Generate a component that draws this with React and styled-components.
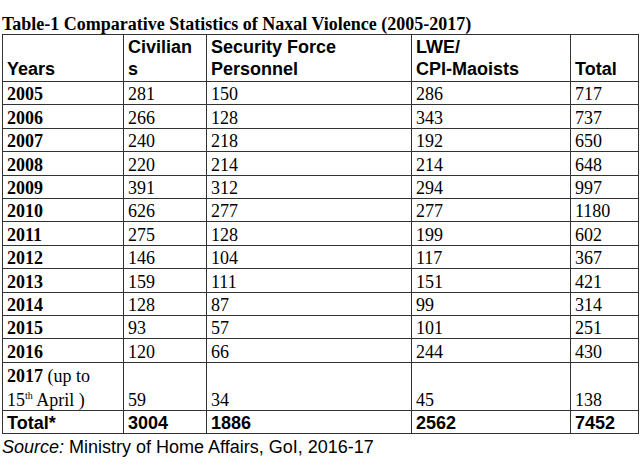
import styled, { createGlobalStyle } from "styled-components"

const GlobalStyle = createGlobalStyle`
    body {
        margin: 0;
        background: white;
    }
`

const Page = styled.div`
    padding: 14px 2px 0 2px;
    width: 636px;
`

const Title = styled.div`
    font-family: "Liberation Serif", "Times New Roman", serif;
    font-weight: bold;
    font-size: 18px;
    line-height: 20px;
    color: #000;
`

const Table = styled.table`
    width: 637px;
    border-collapse: collapse;
    table-layout: fixed;
    border: 1px solid #333;
`

const HeadCell = styled.th`
    font-family: "Liberation Sans", Arial, sans-serif;
    font-weight: bold;
    font-size: 18px;
    line-height: 22px;
    text-align: left;
    vertical-align: bottom;
    padding: 1px 4px 1px 4px;
    border: 1px solid #333;
    height: 44px;
`

const Cell = styled.td`
    font-family: ${p => p.$sans ? '"Liberation Sans", Arial, sans-serif' : '"Liberation Serif", "Times New Roman", serif'};
    font-weight: ${p => p.$bold ? "bold" : "normal"};
    font-size: 18px;
    line-height: 20px;
    text-align: left;
    vertical-align: bottom;
    padding: 1px 4px 0 4px;
    border: 1px solid #333;
    height: ${p => p.$tall ? "46px" : "21.4px"};
`

const Source = styled.div`
    font-family: "Liberation Sans", Arial, sans-serif;
    font-size: 18px;
    line-height: 22px;
    padding-top: 2px;
    color: #000;
`

const rows = [
    ["2005", 281, 150, 286, 717],
    ["2006", 266, 128, 343, 737],
    ["2007", 240, 218, 192, 650],
    ["2008", 220, 214, 214, 648],
    ["2009", 391, 312, 294, 997],
    ["2010", 626, 277, 277, 1180],
    ["2011", 275, 128, 199, 602],
    ["2012", 146, 104, 117, 367],
    ["2013", 159, 111, 151, 421],
    ["2014", 128, 87, 99, 314],
    ["2015", 93, 57, 101, 251],
    ["2016", 120, 66, 244, 430],
]

const App = () => {
    return (
        <>
            <GlobalStyle />
            <Page>
                <Title>Table-1 Comparative Statistics of Naxal Violence (2005-2017)</Title>
                <Table>
                    <colgroup>
                        <col style={{ width: 121 }} />
                        <col style={{ width: 83 }} />
                        <col style={{ width: 205 }} />
                        <col style={{ width: 159 }} />
                        <col style={{ width: 68 }} />
                    </colgroup>
                    <thead>
                        <tr>
                            <HeadCell>Years</HeadCell>
                            <HeadCell>Civilian<br />s</HeadCell>
                            <HeadCell>Security Force<br />Personnel</HeadCell>
                            <HeadCell>LWE/<br />CPI-Maoists</HeadCell>
                            <HeadCell>Total</HeadCell>
                        </tr>
                    </thead>
                    <tbody>
                        {rows.map(r => (
                            <tr key={r[0]}>
                                <Cell $bold>{r[0]}</Cell>
                                <Cell>{r[1]}</Cell>
                                <Cell>{r[2]}</Cell>
                                <Cell>{r[3]}</Cell>
                                <Cell>{r[4]}</Cell>
                            </tr>
                        ))}
                        <tr>
                            <Cell $tall><b>2017</b> (up to<br />15<sup style={{ fontSize: 10 }}>th</sup> April )</Cell>
                            <Cell $tall>59</Cell>
                            <Cell $tall>34</Cell>
                            <Cell $tall>45</Cell>
                            <Cell $tall>138</Cell>
                        </tr>
                        <tr>
                            <Cell $sans $bold>Total*</Cell>
                            <Cell $sans $bold>3004</Cell>
                            <Cell $sans $bold>1886</Cell>
                            <Cell $sans $bold>2562</Cell>
                            <Cell $sans $bold>7452</Cell>
                        </tr>
                    </tbody>
                </Table>
                <Source><i>Source:</i> Ministry of Home Affairs, GoI, 2016-17</Source>
            </Page>
        </>
    )
}

export default App
